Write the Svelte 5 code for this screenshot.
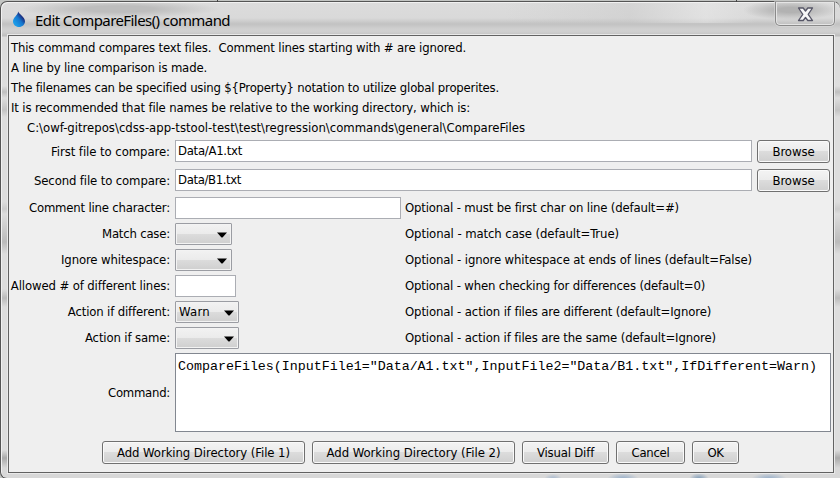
<script>
  const intro = [
    ['This command compares text files.\u00a0 Comment lines starting with # are ignored.', 455],
    ['A line by line comparison is made.', 196],
    ['The filenames can be specified using ${Property} notation to utilize global properites.', 488],
    ['It is recommended that file names be relative to the working directory, which is:', 459],
    ['C:\\owf-gitrepos\\cdss-app-tstool-test\\test\\regression\\commands\\general\\CompareFiles', 498]
  ];
  const files = [
    { label: 'First file to compare:', w: 119, value: 'Data/A1.txt', vw: 64 },
    { label: 'Second file to compare:', w: 136, value: 'Data/B1.txt', vw: 63 }
  ];
  const options = [
    { label: 'Comment line character:', w: 141, field: 226, note: 'Optional - must be first char on line (default=#)', nw: 274 },
    { label: 'Match case:', w: 68, combo: 57, note: 'Optional - match case (default=True)', nw: 214 },
    { label: 'Ignore whitespace:', w: 109, combo: 57, note: 'Optional - ignore whitespace at ends of lines (default=False)', nw: 347 },
    { label: 'Allowed # of different lines:', w: 159, field: 61, note: 'Optional - when checking for differences (default=0)', nw: 300 },
    { label: 'Action if different:', w: 102, combo: 64, value: 'Warn', note: 'Optional - action if files are different (default=Ignore)', nw: 306 },
    { label: 'Action if same:', w: 85, combo: 64, note: 'Optional - action if files are the same (default=Ignore)', nw: 311 }
  ];
  const actions = [
    ['Add Working Directory (File 1)', 203, 173],
    ['Add Working Directory (File 2)', 203, 174],
    ['Visual Diff', 87, 57],
    ['Cancel', 69, 38],
    ['OK', 47, 16]
  ];
  const command = 'CompareFiles(InputFile1="Data/A1.txt",InputFile2="Data/B1.txt",IfDifferent=Warn)';

  // Tracks the text so that it fills the given width.
  function fit(node, width) {
    const natural = node.getBoundingClientRect().width;
    const step = (width - natural) / node.textContent.length;
    node.style.letterSpacing = `${step}px`;
  }
</script>

{#snippet t(text, width)}<span class="t" use:fit={width}>{text}</span>{/snippet}

<div class="desktop">
  <i class="tick a"></i><i class="tick b"></i>
  <div class="window">
    <header>
      <svg class="drop" width="14" height="17" viewBox="0 0 14 17">
        <defs>
          <linearGradient id="water" x1="0" y1="1" x2="1" y2="0">
            <stop offset="0.2" stop-color="#1b9be8" /><stop offset="0.5" stop-color="#1577cf" /><stop offset="0.75" stop-color="#1c2372" />
          </linearGradient>
        </defs>
        <path d="M6.200 0.500C6.800 3 13 6.200 13 10.200C13 13.600 10.200 16 7 16S1 13.600 1 10.200C1 6.500 5.600 4.500 6.200.5Z" fill="url(#water)" />
      </svg>
      <h1>{@render t('Edit CompareFiles() command', 195)}</h1>
      <div class="close">
        <svg width="17" height="15" viewBox="0 0 17 15">
          <path d="M1.500 1h4.700l2.300 3L10.800 1h4.700L11.200 7.300l4.300 6.200h-4.700L8.500 10.500 6.200 13.500H1.500l4.300-6.200Z" fill="#f7f7f7" stroke="#555566" stroke-width="1.300" stroke-linejoin="round" />
        </svg>
      </div>
    </header>
    <main>
      <div class="intro">
        {#each intro as [line, w]}<p>{@render t(line, w)}</p>{/each}
      </div>
      <div class="files">
        {#each files as f}
          <div class="row">
            <label>{@render t(f.label, f.w)}</label>
            <div class="field grow">{@render t(f.value, f.vw)}</div>
            <button class="browse">{@render t('Browse', 42)}</button>
          </div>
        {/each}
      </div>
      <div class="options">
        {#each options as o}
          <div class="row">
            <label>{@render t(o.label, o.w)}</label>
            <div class="cell">
              {#if o.combo}
                <div class="combo" style:width="{o.combo}px">
                  <span>{#if o.value}{@render t(o.value, 31)}{/if}</span>
                  <svg width="10" height="6" viewBox="0 0 10 6"><path d="M0 .5H10L5.500 5.500h-1Z" /></svg>
                </div>
              {:else}
                <div class="field" style:width="{o.field}px"></div>
              {/if}
            </div>
            <div class="note">{@render t(o.note, o.nw)}</div>
          </div>
        {/each}
      </div>
      <div class="row command">
        <label>{@render t('Command:', 62)}</label>
        <div class="area">{@render t(command, 639)}</div>
      </div>
      <footer>
        {#each actions as [name, bw, w]}
          <button style:width="{bw}px">{@render t(name, w)}</button>
        {/each}
      </footer>
    </main>
  </div>
</div>

<style>
  * { box-sizing: border-box; }
  :global(body) { overflow: hidden; }
  .desktop {
    position: relative; width: 840px; height: 478px; padding-top: 1px; background: #c3c5c3; overflow: hidden;
    font: 13px/20px "DejaVu Sans Condensed", "DejaVu Sans", sans-serif; font-stretch: condensed; color: #000;
  }
  .tick { position: absolute; top: 0; width: 1px; height: 2px; background: #444; }
  .a { left: 217px; }
  .b { left: 736px; }
  .t { white-space: pre; display: inline-block; flex: none; }
  .window {
    width: 840px; height: 478px; padding: 0 6px 0 7px; border: 1px solid #555; border-right: 0;
    border-radius: 7px 7px 0 7px;
    box-shadow: inset 1px 1px 0 #f1f1f1;
    background:
      radial-gradient(ellipse 16px 6px at 622px 477px, #91abc8, transparent),
      radial-gradient(ellipse 10px 6px at 698px 477px, #7897b5, transparent),
      radial-gradient(ellipse 18px 6px at 768px 477px, #91abc8, transparent),
      radial-gradient(ellipse 9px 5px at 552px 477px, #a1b5cd, transparent),
      radial-gradient(ellipse 100px 9px at 118px 7px, #bdbdbd 35%, transparent),
      radial-gradient(ellipse 48px 10px at 790px 8px, #b2b2b2 25%, transparent),
      linear-gradient(to right, transparent 60%, #c5c5c555 75%, #ededed66 84%, transparent 90%) 0 0 / 100% 21px no-repeat,
      linear-gradient(#dcdcdc 0, #d9d9d9 16px, #c2c2c2 22px, #d0d0d0 27px, #cfcfcf 30px, #bdbdbd 34px, transparent 35px),
      linear-gradient(#ddd 0 75px, #dedede 84px, #bfbfbf 90px, #ddd 96px, #c3c3c3 108px, #ddd 115px 200px, #ccc 207px, #ddd 212px, #bbb 240px, #ddd 252px 287px, #bbb 296px, #ddd 305px 448px, #aaa 456px, #d8d8d8 466px);
  }
  header { position: relative; display: flex; align-items: center; height: 33px; padding-left: 4px; }
  .drop { margin-top: 2px; }
  h1 { margin: 2px 0 0 9px; font: 15px/20px "Noto Sans", "Open Sans", sans-serif; }
  .close {
    position: absolute; right: -1px; top: 0; width: 60px; height: 24px; display: flex; justify-content: center; padding-top: 5px;
    border: 1px solid #8a8a8a; border-top: 0; border-radius: 0 0 5px 5px; box-shadow: inset 0 0 0 1px #e5e5e5, 0 0 0 1px #dedede88;
  }
  main {
    width: 826px; height: 438px; padding: 2px 2px 0; background: #efefef; border: 1px solid #626262; box-shadow: 0 0 0 1px #e9e9e9;
  }
  p { margin: 0; height: 20px; }
  .intro p:last-child { padding-left: 16px; }
  .files { display: flex; flex-direction: column; gap: 6px; padding-top: 2px; }
  .row { display: flex; }
  label { width: 159px; margin-right: 5px; height: 23px; display: flex; justify-content: flex-end; align-items: center; flex: none; }
  .field { height: 22px; border: 1px solid #abadb3; background: #fff; padding: 0 2px; }
  .grow { width: 577px; }
  button {
    height: 23px; padding: 0; border: 1px solid #707070; border-radius: 3px; font: inherit; color: #000;
    display: flex; align-items: center; justify-content: center; box-shadow: inset 0 0 0 1px #fafafa;
    background: linear-gradient(#f2f2f2 0 10%, #ebebeb 49%, #dcdcdc 50%, #cfcfcf);
  }
  .browse { width: 73px; margin-left: 5px; }
  .options { display: flex; flex-direction: column; gap: 4px; padding-top: 5px; }
  .options label { height: 22px; }
  .cell { width: 230px; }
  .combo {
    height: 22px; display: flex; align-items: center; justify-content: space-between; padding: 0 4px 0 3px; border: 1px solid #9b9da3; border-radius: 1px;
    background: linear-gradient(#f2f2f2, #ebebeb 49%, #dcdcdc 50%, #cfcfcf); box-shadow: inset 0 0 0 1px #f3f3f3;
  }
  .combo svg { margin-top: 1px; }
  .note { padding-top: 1px; }
  .command { padding-top: 4px; }
  .command label { height: 79px; }
  .area {
    width: 656px; height: 79px; padding: 3px 2px; border: 1px solid #828790; background: #fff;
    font: 13.33px/20px "Liberation Mono", monospace;
  }
  footer { display: flex; gap: 7px; padding: 9px 0 0 91px; }
</style>
